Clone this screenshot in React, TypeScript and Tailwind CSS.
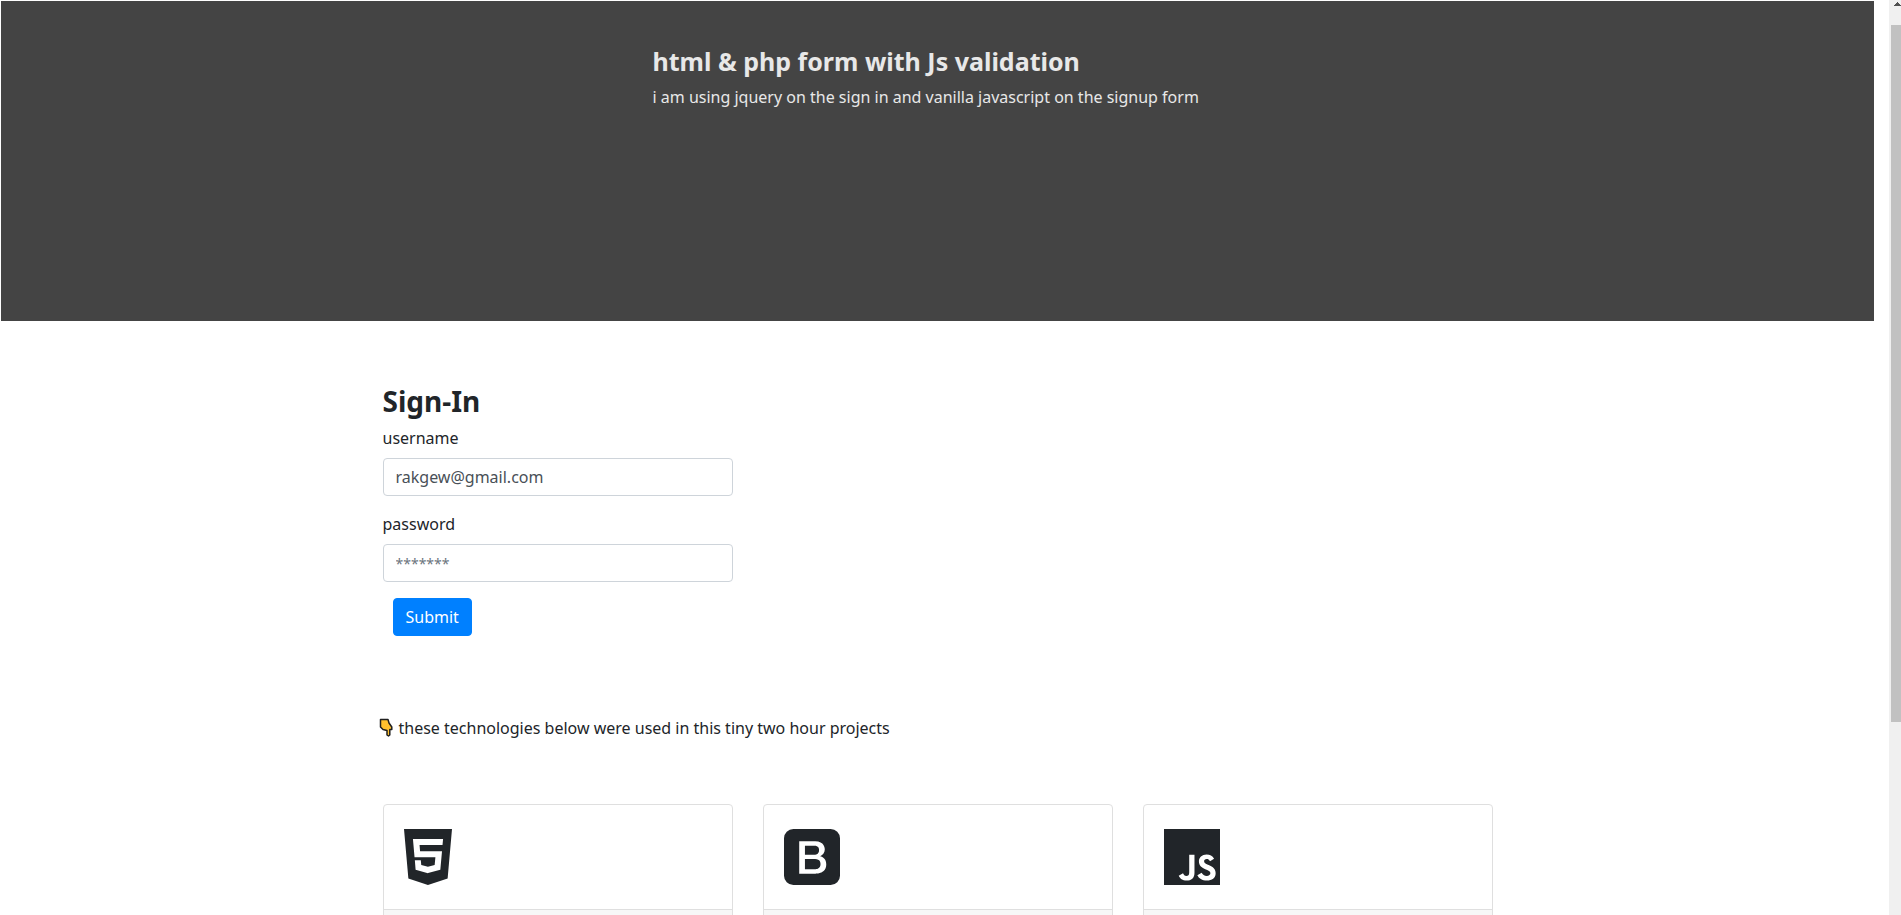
import React from "react";
import { FaHtml5, FaJs } from "react-icons/fa";

function BootstrapLogo(props: React.SVGProps<SVGSVGElement>) {
  return (
    <svg viewBox="0 0 448 512" fill="currentColor" {...props}>
      <path d="M292.3 311.93c0 42.41-39.72 41.43-43.92 41.43h-80.89v-81.69h80.89c42.56 0 43.92 31.9 43.92 40.26zm-50.15-73.13c.67 0 38.44 1 38.44-36.31 0-15.53-3.51-35.87-38.44-35.87h-74.66v72.18h74.66zM448 106.67v298.66A74.89 74.89 0 0 1 373.33 480H74.67A74.89 74.89 0 0 1 0 405.33V106.67A74.89 74.89 0 0 1 74.67 32h298.66A74.89 74.89 0 0 1 448 106.67zM338.05 317.86c0-21.57-6.65-58.29-49.05-67.35v-.73c22.91-9.78 37.34-28.25 37.34-55.64 0-7-2-64.78-77.6-64.78h-127v261.33c128.23 0 139.87 1.68 163.6-5.71 14.21-4.42 52.71-17.98 52.71-67.12z" />
    </svg>
  );
}

const technologies = [
  { name: "HTML5", Icon: FaHtml5, size: "h-16 w-12" },
  { name: "Bootstrap", Icon: BootstrapLogo, size: "h-16 w-14" },
  { name: "JavaScript", Icon: FaJs, size: "h-16 w-14" },
];

function Header() {
  return (
    <header className="flex h-80 justify-center bg-[#444] pt-11 text-[#e8e8e8]">
      <div className="w-[570px] whitespace-nowrap">
        <h1 className="mb-2 text-[25px] leading-8 font-bold">html &amp; php form with Js validation</h1>
        <p className="text-base">i am using jquery on the sign in and vanilla javascript on the signup form</p>
      </div>
    </header>
  );
}

function Field({ id, label, ...input }: { id: string; label: string } & React.InputHTMLAttributes<HTMLInputElement>) {
  return (
    <div className="mb-4">
      <label htmlFor={id} className="mb-2 block">
        {label}
      </label>
      <input
        id={id}
        className="block h-[38px] w-full rounded border border-[#ced4da] bg-white px-3 text-[#495057] placeholder:text-sm placeholder:text-[#6c757d]"
        {...input}
      />
    </div>
  );
}

function SignIn() {
  return (
    <form className="w-[350px]" onSubmit={(e) => e.preventDefault()}>
      <h2 className="mb-2 text-[28px] leading-[34px] font-bold">Sign-In</h2>
      <Field id="username" label="username" type="text" defaultValue="rakgew@gmail.com" />
      <Field id="password" label="password" type="password" placeholder="*******" />
      <button
        type="submit"
        className="ml-[10px] h-[38px] rounded border border-[#0080ff] bg-[#0080ff] px-3 text-white"
      >
        Submit
      </button>
    </form>
  );
}

function PointingDown() {
  return (
    <svg viewBox="0 0 14 20" className="h-5 w-3.5" aria-hidden="true">
      <path
        d="M1.5 1.5h7.5l1 3.5 2.8 4v2.5h-2V17L9.5 18 8 17v-4.500L4 11.500 1.500 9z"
        fill="#ffc02e"
        stroke="#1f1f1f"
        strokeWidth="1.5"
        strokeLinejoin="round"
      />
    </svg>
  );
}

function Scrollbar() {
  return (
    <div className="flex w-3 shrink-0 flex-col bg-[#f0f0f0] pl-0.5" aria-hidden="true">
      <div className="flex h-[25px] items-start justify-end pt-0.5">
        <svg viewBox="0 0 7 4" className="h-1 w-[7px]" shapeRendering="crispEdges">
          <path d="M3 0h1v1h1v1h1v1h1v1H0V3h1V2h1V1h1z" fill="#505050" />
        </svg>
      </div>
      <div className="h-[76.2%] bg-[#c1c1c1]" />
    </div>
  );
}

export default function App() {
  return (
    <div className="flex h-screen overflow-hidden bg-white font-['Noto_Sans',sans-serif] text-base leading-6 text-[#212529]">
      <div className="min-w-0 flex-1 overflow-hidden pt-px pr-[15px] pl-px">
        <Header />
        <main className="mx-auto max-w-[1110px] pt-[63px]">
          <SignIn />
          <p className="-ml-1 flex items-center gap-1.5 pt-20">
            <PointingDown />
            these technologies below were used in this tiny two hour projects
          </p>
          <div className="mt-16 grid grid-cols-3 gap-[30px]">
            {technologies.map(({ name, Icon, size }) => (
              <article key={name} className="rounded border border-[#dfdfdf]">
                <div className="p-5">
                  <Icon className={size} role="img" aria-label={name} />
                </div>
                <div className="h-12 rounded-b border-t border-[#dfdfdf] bg-[#f7f7f7]" />
              </article>
            ))}
          </div>
        </main>
      </div>
      <Scrollbar />
    </div>
  );
}
